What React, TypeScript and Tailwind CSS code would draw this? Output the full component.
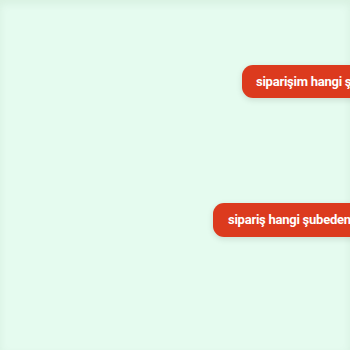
export default function App() {
  return (
    <div
      className="w-[350px] h-[350px] overflow-hidden bg-[#e5fbef] shadow-[inset_0_4px_8px_rgba(0,60,20,0.06)]"
      style={{ fontFamily: "Roboto, 'Noto Sans', sans-serif" }}
    >
      <div className="flex flex-col pt-[65px]">
        <div className="ml-[242px] w-[220px] h-[33px] flex items-center px-[14px] rounded-[11px] bg-[#dc3a1e] text-white text-[13px] font-bold tracking-[-0.25px] whitespace-nowrap shadow-[0_2px_6px_rgba(0,0,0,0.12)]">
          siparişim hangi şubede
        </div>
        <div className="ml-[213px] mt-[105px] w-[220px] h-[34px] flex items-center px-[15px] rounded-[11px] bg-[#dc3a1e] text-white text-[13px] font-bold tracking-[-0.25px] whitespace-nowrap shadow-[0_2px_6px_rgba(0,0,0,0.12)]">
          sipariş hangi şubeden
        </div>
      </div>
    </div>
  );
}
